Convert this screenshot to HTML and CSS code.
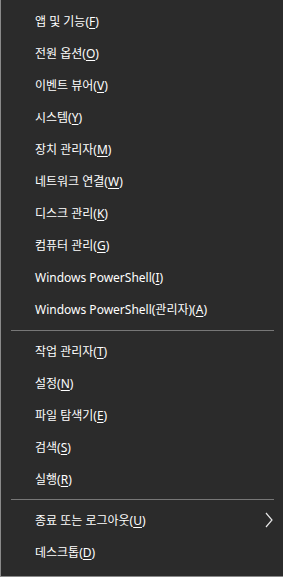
FILE: index.html
```html
<!DOCTYPE html>
<html lang="ko">
<head>
<meta charset="utf-8">
<link rel="stylesheet" href="styles.css">
</head>
<body>
<div class="menu">
  <div class="group">
    <div class="item">앱 및 기능(<u>F</u>)</div>
    <div class="item">전원 옵션(<u>O</u>)</div>
    <div class="item">이벤트 뷰어(<u>V</u>)</div>
    <div class="item">시스템(<u>Y</u>)</div>
    <div class="item">장치 관리자(<u>M</u>)</div>
    <div class="item">네트워크 연결(<u>W</u>)</div>
    <div class="item">디스크 관리(<u>K</u>)</div>
    <div class="item">컴퓨터 관리(<u>G</u>)</div>
    <div class="item">Windows PowerShell(<u>I</u>)</div>
    <div class="item">Windows PowerShell(관리자)(<u>A</u>)</div>
  </div>
  <div class="sep first"></div>
  <div class="group">
    <div class="item">작업 관리자(<u>T</u>)</div>
    <div class="item">설정(<u>N</u>)</div>
    <div class="item">파일 탐색기(<u>E</u>)</div>
    <div class="item">검색(<u>S</u>)</div>
    <div class="item">실행(<u>R</u>)</div>
  </div>
  <div class="sep"></div>
  <div class="group">
    <div class="item sub"><span class="label">종료 또는 로그아웃(<u>U</u>)</span><svg class="chev" width="8" height="16" viewBox="0 0 8 16"><polyline points="1,1 7,8 1,15" fill="none" stroke="#e6e6e6" stroke-width="1.2"/></svg></div>
    <div class="item">데스크톱(<u>D</u>)</div>
  </div>
</div>
</body>
</html>
```

FILE: styles.css
```css
html, body {
  margin: 0;
  padding: 0;
  background: #2b2b2b;
}
.menu {
  width: 283px;
  height: 577px;
  box-sizing: border-box;
  background: #2b2b2b;
  border-left: 1px solid #8a8a8a;
  border-bottom: 1px solid #8a8a8a;
  padding-top: 5px;
  font-family: "Noto Sans", "Noto Sans CJK KR", sans-serif;
  font-size: 12px;
  color: #ffffff;
}
.group {
  display: flex;
  flex-direction: column;
}
.item {
  height: 32px;
  display: flex;
  align-items: center;
  padding-left: 34px;
  padding-right: 10px;
  white-space: pre;
}
.item u {
  text-decoration: underline;
  text-underline-offset: 2px;
}
.sub {
  justify-content: space-between;
}
.chev {
  display: block;
}
.sep {
  height: 1px;
  background: #777777;
  margin: 4px 9px 4px 10px;
}
.sep.first {
  margin-top: 5px;
}
```
